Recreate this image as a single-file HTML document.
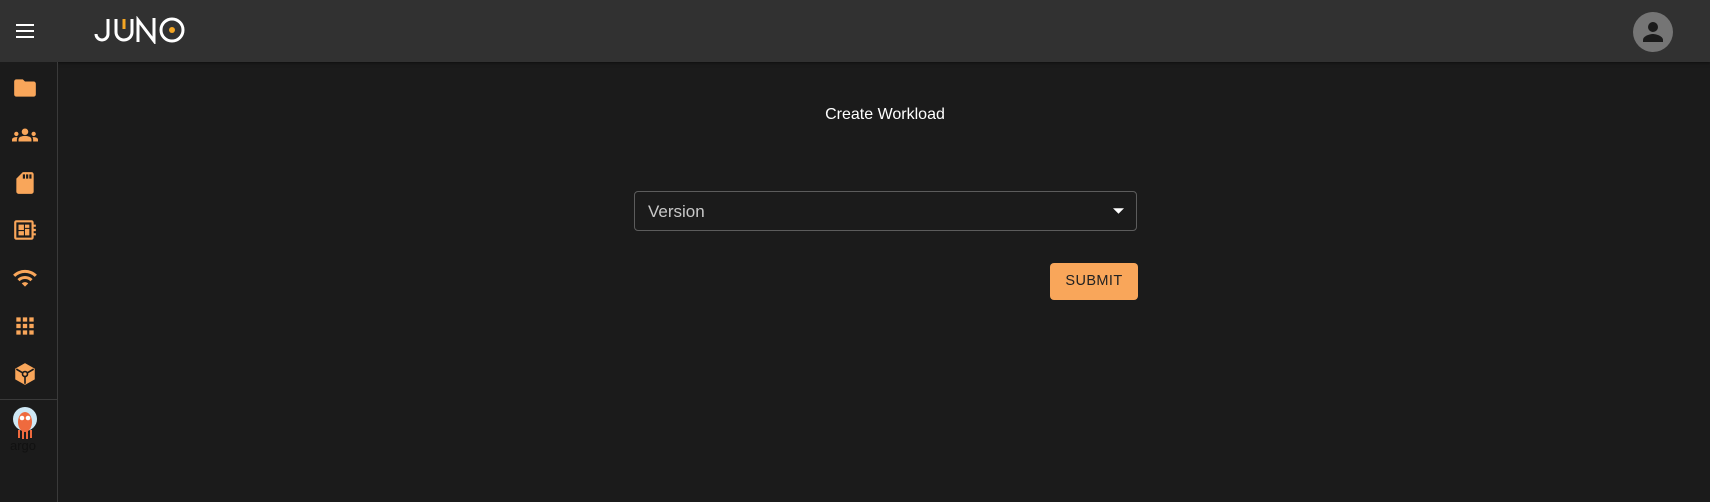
<!DOCTYPE html>
<html><head><style>
body{margin:0;width:1710px;height:502px;background:#1b1b1b;font-family:"Liberation Sans",sans-serif;overflow:hidden;position:relative}
.hdr{position:absolute;left:0;top:0;width:1710px;height:62px;background:#313131;box-shadow:0 1px 3px rgba(0,0,0,.5)}
.side{position:absolute;left:0;top:62px;width:57px;height:440px;border-right:1px solid #3a3a3a;background:#1b1b1b}
.ic{position:absolute;left:12px;width:26px;height:26px}
svg{display:block}
</style></head><body>
<div class="hdr">
 <svg style="position:absolute;left:15px;top:21px" width="20" height="20" viewBox="0 0 20 20"><rect x="1" y="3" width="18" height="2" fill="#fff"/><rect x="1" y="9" width="18" height="2" fill="#fff"/><rect x="1" y="15" width="18" height="2" fill="#fff"/></svg>
 <svg style="position:absolute;left:94px;top:16px" width="92" height="28" viewBox="0 0 92 28">
  <path d="M12 3V18a6 6 0 0 1-12 0" stroke="#fff" stroke-width="3" fill="none" transform="translate(2,0)"/>
  <path d="M22 3V16a8 8 0 0 0 16 0V3" stroke="#fff" stroke-width="3" fill="none"/>
  <rect x="28.5" y="3" width="3" height="10" fill="#f5a623"/>
  <path d="M44 26V4L60 25V2" stroke="#fff" stroke-width="3" fill="none"/>
  <circle cx="78" cy="14" r="11" stroke="#fff" stroke-width="3" fill="none"/>
  <circle cx="78" cy="14" r="3" fill="#f5a623"/>
 </svg>
 <svg style="position:absolute;left:1633px;top:12px" width="40" height="40" viewBox="0 0 40 40"><circle cx="20" cy="20" r="20" fill="#757575"/><circle cx="20" cy="15" r="5" fill="#1b1b1b"/><path d="M10 28c0-4 7-6 10-6s10 2 10 6v2H10z" fill="#1b1b1b"/></svg>
</div>
<div class="side">
 <svg class="ic" style="top:13px" viewBox="0 0 24 24"><path fill="#f9a65a" d="M10 4H4c-1.1 0-2 .9-2 2v12c0 1.1.9 2 2 2h16c1.1 0 2-.9 2-2V8c0-1.1-.9-2-2-2h-8l-2-2z"/></svg>
 <svg class="ic" style="top:60px" viewBox="0 0 24 24"><path fill="#f9a65a" d="M12 12.75c1.63 0 3.070.39 4.240.9 1.080.48 1.760 1.560 1.760 2.730V18H6v-1.610c0-1.180.68-2.260 1.760-2.730 1.170-.52 2.610-.91 4.240-.91zM4 13c1.1 0 2-.9 2-2s-.9-2-2-2-2 .9-2 2 .9 2 2 2zm1.130 1.100c-.37-.06-.74-.1-1.130-.1-.99 0-1.930.21-2.780.58C.48 14.900 0 15.620 0 16.430V18h4.500v-1.610c0-.83.23-1.610.63-2.290zM20 13c1.100 0 2-.9 2-2s-.9-2-2-2-2 .9-2 2 .9 2 2 2zm4 3.430c0-.81-.48-1.530-1.220-1.850-.85-.37-1.790-.58-2.780-.58-.39 0-.76.04-1.130.1.4.68.63 1.460.63 2.290V18H24v-1.570zM12 6c1.660 0 3 1.340 3 3s-1.340 3-3 3-3-1.340-3-3 1.340-3 3-3z"/></svg>
 <svg class="ic" style="top:108px" viewBox="0 0 24 24"><path fill="#f9a65a" d="M18 2h-8L4.02 8 4 20c0 1.1.9 2 2 2h12c1.1 0 2-.9 2-2V4c0-1.1-.9-2-2-2zm-6 6h-2V4h2v4zm3 0h-2V4h2v4zm3 0h-2V4h2v4z"/></svg>
 <svg class="ic" style="top:155px" viewBox="0 0 24 24"><path fill="#f9a65a" d="M22 9V7h-2V5c0-1.1-.9-2-2-2H4c-1.1 0-2 .9-2 2v14c0 1.1.9 2 2 2h14c1.1 0 2-.9 2-2v-2h2v-2h-2v-2h2v-2h-2V9h2zm-4 10H4V5h14v14zM6 13h5v4H6zm6-6h4v3h-4zM6 7h5v5H6zm6 4h4v6h-4z"/></svg>
 <svg class="ic" style="top:203px" viewBox="0 0 24 24"><path fill="#f9a65a" d="M1 9l2 2c4.97-4.97 13.03-4.97 18 0l2-2C16.93 2.93 7.08 2.93 1 9zm8 8l3 3 3-3c-1.65-1.66-4.34-1.66-6 0zm-4-4l2 2c2.76-2.76 7.24-2.76 10 0l2-2C15.14 9.14 8.87 9.14 5 13z"/></svg>
 <svg class="ic" style="top:251px" viewBox="0 0 24 24"><path fill="#f9a65a" d="M4 8h4V4H4v4zm6 12h4v-4h-4v4zm-6 0h4v-4H4v4zm0-6h4v-4H4v4zm6 0h4v-4h-4v4zm6-10v4h4V4h-4zm-6 4h4V4h-4v4zm6 6h4v-4h-4v4zm0 6h4v-4h-4v4z"/></svg>
 <svg class="ic" style="top:299px" viewBox="0 0 24 24"><path fill="#f9a65a" d="M12 2L3 7v10l9 5 9-5V7z"/><circle cx="12" cy="12" r="2.3" fill="none" stroke="#1b1b1b" stroke-width="1.5"/><path d="M12 14.3V21M10 11l-6-3.5M14 11l6-3.5" stroke="#1b1b1b" stroke-width="1.5"/></svg>
 <div style="position:absolute;left:0;top:337px;width:57px;height:1px;background:#3a3a3a"></div>
 <svg style="position:absolute;left:10px;top:344px" width="32" height="48" viewBox="0 0 32 48"><circle cx="15" cy="13" r="12" fill="#cfe8f5"/><ellipse cx="15" cy="16" rx="7" ry="10" fill="#ef6a3e"/><circle cx="12" cy="12" r="2.3" fill="#fff"/><circle cx="18" cy="12" r="2.3" fill="#fff"/><path d="M9 24v8M13 24v9M17 24v9M21 24v8" stroke="#ef6a3e" stroke-width="2"/><text x="0" y="44" font-family="Liberation Sans" font-size="13" fill="#111">argo</text></svg>
</div>
<div style="position:absolute;left:0;width:1770px;top:106px;text-align:center;color:#fff;font-size:16px">Create Workload</div>
<div style="position:absolute;left:634px;top:191px;width:501px;height:38px;border:1px solid #5c5c5c;border-radius:4px">
 <span style="position:absolute;left:13px;top:10px;color:#c8c8c8;font-size:17px">Version</span>
 <svg style="position:absolute;right:12px;top:16px" width="11" height="6" viewBox="0 0 10 5"><path d="M0 0l5 5 5-5z" fill="#fff"/></svg>
</div>
<div style="position:absolute;left:1050px;top:263px;width:88px;height:37px;background:#f9a65a;border-radius:4px;color:#222;font-size:14.5px;text-align:center;line-height:37px;letter-spacing:.4px">SUBMIT</div>
</body></html>
